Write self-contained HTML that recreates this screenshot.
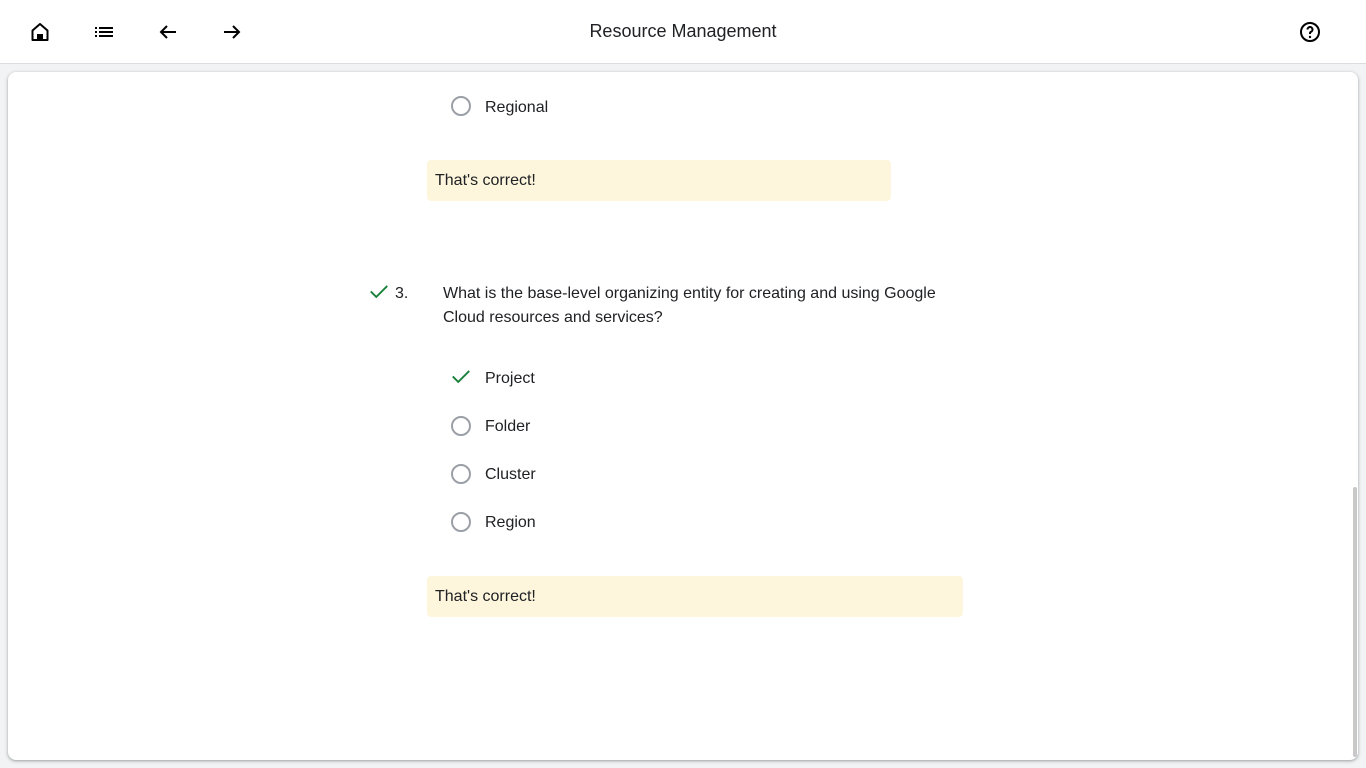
<!DOCTYPE html>
<html><head><meta charset="utf-8"><style>
*{margin:0;padding:0;box-sizing:border-box}
body{width:1366px;height:768px;background:#f1f3f4;font-family:"Liberation Sans",Roboto,sans-serif;color:#202124;overflow:hidden;position:relative}
.hdr{position:absolute;left:0;top:0;width:1366px;height:64px;background:#fff;border-bottom:1px solid #dadce0}
.hdr svg{position:absolute;top:20px;width:24px;height:24px}
.title{position:absolute;left:0;width:1366px;top:21px;text-align:center;font-size:18px;color:#202124}
.card{position:absolute;left:8px;top:72px;width:1350px;height:688px;background:#fff;border-radius:8px;box-shadow:0 1px 2px rgba(60,64,67,.3),0 1px 3px 1px rgba(60,64,67,.15)}
.sb{position:absolute;left:1353px;top:487px;width:4px;height:270px;background:#c8c8c8;border-radius:2px}
.t{position:absolute;font-size:16px;line-height:24px}
.radio{position:absolute;width:20px;height:20px;border:2px solid #9aa0a6;border-radius:50%}
.fb{position:absolute;background:#fdf6dd;border-radius:4px;font-size:16px;line-height:40px;padding-left:8px;padding-top:1px}
</style></head><body>
<div class="hdr">
<svg style="left:28px" viewBox="0 0 24 24"><path d="M12 4 L4.5 10.5 V20 H19.5 V10.5 Z" fill="none" stroke="#000" stroke-width="2" stroke-linejoin="round"/><rect x="9" y="14" width="6" height="6" fill="#000"/></svg>
<svg style="left:92px" viewBox="0 0 24 24"><path d="M3 7h2v2H3zM3 11h2v2H3zM3 15h2v2H3zM7 7h14v2H7zM7 11h14v2H7zM7 15h14v2H7z" fill="#000"/></svg>
<svg style="left:156px" viewBox="0 0 24 24"><path d="M20 12H5M11 6l-6 6 6 6" fill="none" stroke="#000" stroke-width="2"/></svg>
<svg style="left:220px" viewBox="0 0 24 24"><path d="M4 12h15M13 6l6 6-6 6" fill="none" stroke="#000" stroke-width="2"/></svg>
<div class="title">Resource Management</div>
<svg style="left:1298px" viewBox="0 0 24 24"><circle cx="12" cy="12" r="9" fill="none" stroke="#000" stroke-width="2"/><path d="M9.5 9.5a2.5 2.5 0 1 1 3.5 2.3c-.7.3-1 .8-1 1.6v.6" fill="none" stroke="#000" stroke-width="2"/><circle cx="12" cy="17" r="1.2" fill="#000"/></svg>
</div>
<div class="card"></div>
<div class="sb"></div>

<div class="radio" style="left:451px;top:96px"></div>
<div class="t" style="left:485px;top:96px">Regional</div>
<div class="fb" style="left:427px;top:160px;width:464px">That's correct!</div>

<svg style="position:absolute;left:368px;top:280px" width="22" height="22" viewBox="0 0 24 24"><path d="M3 12.5l6 6L21 6.5" fill="none" stroke="#188038" stroke-width="2"/></svg>
<div class="t" style="left:395px;top:282px">3.</div>
<div class="t" style="left:443px;top:282px">What is the base-level organizing entity for creating and using Google<br>Cloud resources and services?</div>

<svg style="position:absolute;left:450px;top:365px" width="22" height="22" viewBox="0 0 24 24"><path d="M3 12.5l6 6L21 6.5" fill="none" stroke="#188038" stroke-width="2"/></svg>
<div class="t" style="left:485px;top:367px">Project</div>
<div class="radio" style="left:451px;top:416px"></div>
<div class="t" style="left:485px;top:415px">Folder</div>
<div class="radio" style="left:451px;top:464px"></div>
<div class="t" style="left:485px;top:463px">Cluster</div>
<div class="radio" style="left:451px;top:512px"></div>
<div class="t" style="left:485px;top:511px">Region</div>
<div class="fb" style="left:427px;top:576px;width:536px">That's correct!</div>
</body></html>
